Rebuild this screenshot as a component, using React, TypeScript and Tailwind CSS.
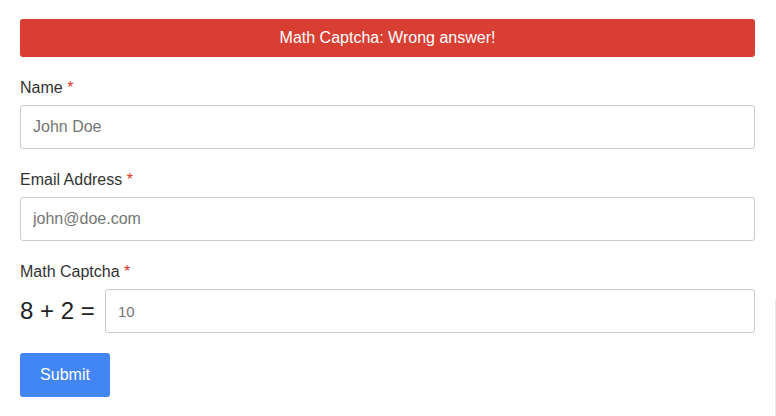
import { useState } from 'react';

const fields = [
  { id: 'name', label: 'Name', placeholder: 'John Doe', type: 'text' },
  { id: 'email', label: 'Email Address', placeholder: 'john@doe.com', type: 'email' },
];

function Label({ htmlFor, children }: { htmlFor: string; children: React.ReactNode }) {
  return (
    <label htmlFor={htmlFor} className="mb-[7px] block text-[16px] leading-[21px] text-[#333333]">
      {children} <span className="text-[#e0352b]">*</span>
    </label>
  );
}

export default function App() {
  const [values, setValues] = useState<Record<string, string>>({});
  const [answer, setAnswer] = useState('');

  return (
    <div className="relative min-h-[416px] bg-white px-[20px] pt-[19px] font-['Liberation_Sans',Arial,sans-serif]">
      <div className="flex h-[38px] w-[735px] items-center justify-center rounded-[3px] bg-[#d93e33] text-[16px] text-white">
        Math Captcha: Wrong answer!
      </div>

      <form className="w-[735px]" onSubmit={(e) => e.preventDefault()}>
        {fields.map((f) => (
          <div key={f.id} className="mt-[20px]">
            <Label htmlFor={f.id}>{f.label}</Label>
            <input
              id={f.id}
              type={f.type}
              placeholder={f.placeholder}
              value={values[f.id] ?? ''}
              onChange={(e) => setValues({ ...values, [f.id]: e.target.value })}
              className="block h-[44px] w-full rounded-[3px] border border-[#cccccc] bg-white px-[12px] text-[16px] text-[#333333] placeholder:text-[#757575] focus:outline-none"
            />
          </div>
        ))}

        <div className="mt-[20px]">
          <Label htmlFor="captcha">Math Captcha</Label>
          <div className="flex items-center">
            <span className="w-[85px] shrink-0 text-[24px] leading-[44px] text-[#222222]">8 + 2 =</span>
            <input
              id="captcha"
              type="text"
              placeholder="10"
              value={answer}
              onChange={(e) => setAnswer(e.target.value)}
              className="block h-[44px] flex-1 rounded-[3px] border border-[#cccccc] bg-white px-[12px] text-[15px] text-[#333333] placeholder:text-[#757575] focus:outline-none"
            />
          </div>
        </div>

        <button
          type="submit"
          className="mt-[20px] h-[44px] w-[90px] rounded-[3px] bg-[#4285f4] text-[16px] text-white"
        >
          Submit
        </button>
      </form>

      <div className="absolute right-0 top-[300px] bottom-0 w-px bg-[#e6e6e6]" />
    </div>
  );
}
